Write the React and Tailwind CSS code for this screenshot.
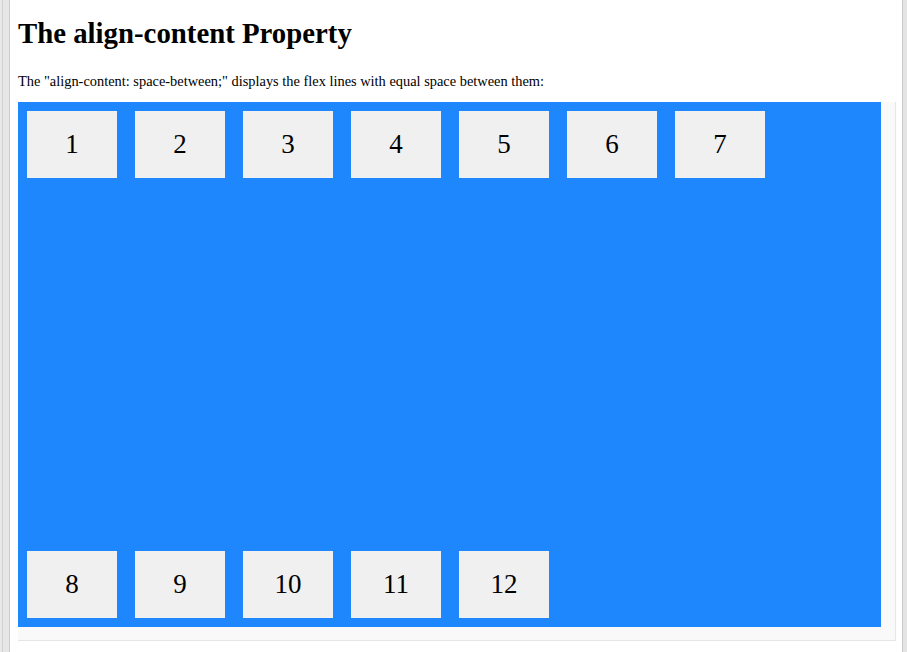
export default function App() {
  const items = [1, 2, 3, 4, 5, 6, 7, 8, 9, 10, 11, 12];
  return (
    <div className="flex h-[652px] w-[907px] overflow-hidden bg-white" style={{ fontFamily: '"Liberation Serif", "Times New Roman", serif' }}>
      <div className="flex h-full w-[10px] shrink-0 bg-[#e4e4e4]">
        <div className="h-full w-[2px] bg-[#e8e8e8]" />
        <div className="h-full w-px bg-[#d2d2d2]" />
        <div className="h-full flex-1 bg-[#e6e6e6]" />
        <div className="h-full w-px bg-[#cdcdcd]" />
      </div>
      <div className="h-full flex-1 overflow-hidden pl-[8px] pr-[6px]">
        <h1 className="mt-[17px] text-[28.8px] leading-[33px] font-bold text-black">The align-content Property</h1>
        <p className="mt-[23px] text-[14.4px] leading-[16px] text-black">
          The "align-content: space-between;" displays the flex lines with equal space between them:
        </p>
        <div className="mt-[13px] h-[539px] w-[878px] border-r border-b border-[#e6e6e6] bg-[#f9f9f9]">
          <div className="flex h-[525px] w-[863px] flex-wrap content-between bg-[#1e87fd]">
            {items.map((n) => (
              <div key={n} className="m-[9px] h-[67px] w-[90px] bg-[#f0f0f0] text-center text-[27px] leading-[67px] text-black">
                {n}
              </div>
            ))}
          </div>
        </div>
      </div>
      <div className="flex h-full w-[5px] shrink-0">
        <div className="h-full w-px bg-[#c9c9c9]" />
        <div className="h-full flex-1 bg-[#e4e4e4]" />
      </div>
    </div>
  );
}
